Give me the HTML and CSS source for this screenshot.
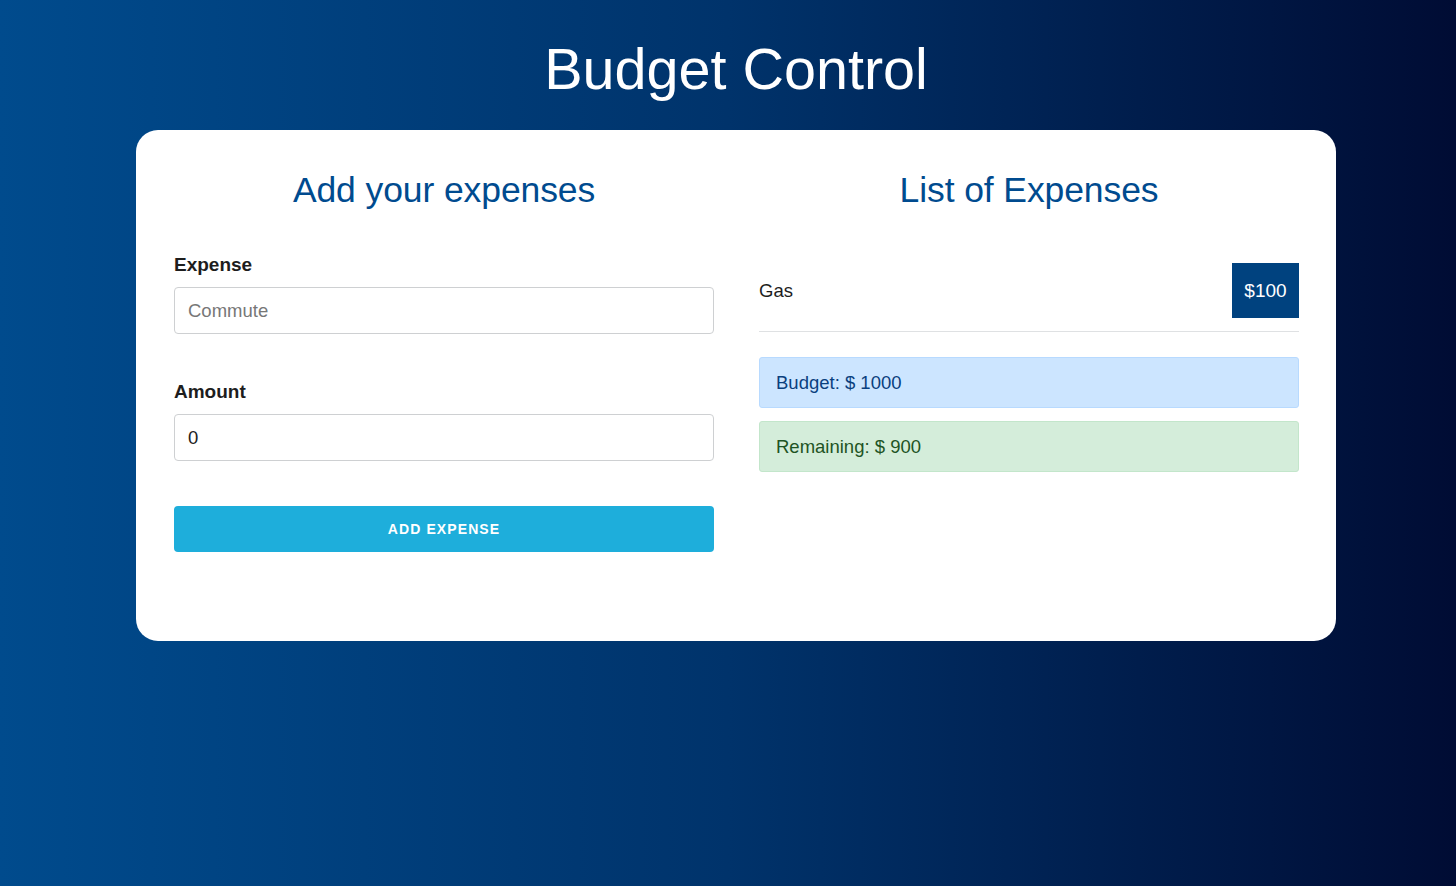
FILE: index.html
```html
<!DOCTYPE html>
<html lang="en">
<head>
<meta charset="utf-8">
<title>Budget Control</title>
<link rel="stylesheet" href="styles.css">
</head>
<body>
<main class="app">
  <h1 class="app-title">Budget Control</h1>
  <section class="card">
    <div class="col">
      <h2 class="col-title">Add your expenses</h2>
      <form class="expense-form">
        <div class="field">
          <label class="field-label" for="expense">Expense</label>
          <input class="field-input" id="expense" type="text" placeholder="Commute">
        </div>
        <div class="field">
          <label class="field-label" for="amount">Amount</label>
          <input class="field-input" id="amount" type="number" value="0">
        </div>
        <button type="button" class="btn-add">Add Expense</button>
      </form>
    </div>
    <div class="col">
      <h2 class="col-title">List of Expenses</h2>
      <ul class="expense-list">
        <li class="expense-item">
          <span class="expense-name">Gas</span>
          <span class="expense-badge">$100</span>
        </li>
      </ul>
      <div class="alert alert-budget">Budget: $ 1000</div>
      <div class="alert alert-remaining">Remaining: $ 900</div>
    </div>
  </section>
</main>
</body>
</html>
```
FILE: styles.css
```css
* { box-sizing: border-box; }
html, body { height: 100%; }
body {
  margin: 0;
  font-family: "Liberation Sans", Arial, sans-serif;
  background: linear-gradient(to right, #004b8d 0%, #00336b 50%, #000c34 100%);
  min-height: 886px;
}
.app {
  display: flex;
  flex-direction: column;
  align-items: center;
  padding-left: 16px;
}
.app-title {
  margin: 33px 0 0;
  font-size: 57.5px;
  font-weight: 400;
  line-height: 72px;
  color: #fff;
}
.card {
  margin-top: 25px;
  width: 1200px;
  min-height: 511px;
  background: #fff;
  border-radius: 22px;
  padding: 34px 37px 40px 38px;
  display: grid;
  grid-template-columns: 540px 540px;
  column-gap: 45px;
  align-items: start;
}
.col-title {
  margin: 0;
  text-align: center;
  font-size: 35.5px;
  font-weight: 400;
  line-height: 52px;
  color: #004b8f;
  letter-spacing: -0.1px;
}
.expense-form { margin-top: 38px; }
.field { margin-bottom: 47px; }
.field + .field { margin-bottom: 45px; }
.field-label {
  display: block;
  font-size: 19px;
  font-weight: 700;
  color: #1d1d1d;
  line-height: 22px;
  margin-bottom: 11px;
}
.field-input {
  display: block;
  width: 100%;
  height: 47px;
  border: 1px solid #ced0d2;
  border-radius: 4px;
  padding: 0 13px;
  font-family: "Liberation Sans", Arial, sans-serif;
  font-size: 18.5px;
  color: #222;
  background: #fff;
  outline: none;
}
.field-input::placeholder { color: #777; }
.field-input::-webkit-outer-spin-button,
.field-input::-webkit-inner-spin-button { -webkit-appearance: none; margin: 0; }
.field-input[type=number] { -moz-appearance: textfield; }
.btn-add {
  display: block;
  width: 100%;
  height: 46px;
  border: none;
  border-radius: 4px;
  background: #1eaedb;
  color: #fff;
  font-family: "Liberation Sans", Arial, sans-serif;
  font-size: 14px;
  font-weight: 700;
  letter-spacing: 1.1px;
  text-transform: uppercase;
  cursor: pointer;
}
.expense-list {
  list-style: none;
  margin: 47px 0 0;
  padding: 0;
}
.expense-item {
  display: flex;
  align-items: center;
  justify-content: space-between;
  padding-bottom: 13px;
  border-bottom: 1px solid #dfe1e3;
}
.expense-name {
  font-size: 18.5px;
  color: #1d1d1d;
}
.expense-badge {
  width: 67px;
  height: 55px;
  display: flex;
  align-items: center;
  justify-content: center;
  background: #00427f;
  color: #fff;
  font-size: 19px;
}
.alert {
  height: 51px;
  border-radius: 3px;
  padding: 0 16px;
  display: flex;
  align-items: center;
  font-size: 18.5px;
}
.alert-budget {
  margin-top: 25px;
  background: #cce5ff;
  border: 1px solid #b8daff;
  color: #0a3f7e;
}
.alert-remaining {
  margin-top: 13px;
  background: #d4edda;
  border: 1px solid #c3e6cb;
  color: #1e5424;
}
```
